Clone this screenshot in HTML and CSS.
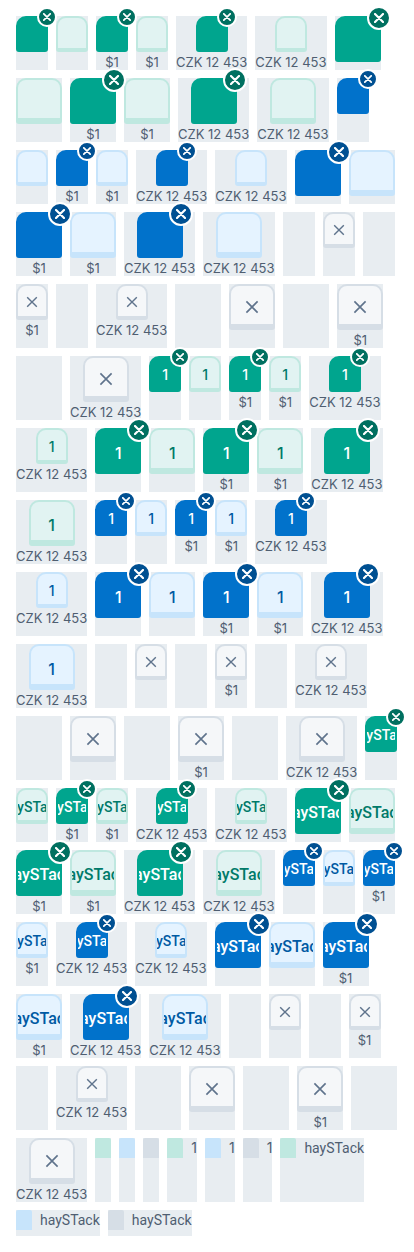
FILE: index.html
```html
<!DOCTYPE html>
<html lang="en">
<head>
<meta charset="utf-8">
<meta name="viewport" content="width=device-width, initial-scale=1">
<title>Seats</title>
<link rel="stylesheet" href="styles.css">
</head>
<body>
<svg class="sprite" aria-hidden="true">
  <symbol id="cross" viewBox="0 0 12 12"><path d="M1.2 1.2 10.8 10.8M10.8 1.2 1.2 10.8"/></symbol>
</svg>
<main class="board" id="board"></main>
<script src="seats.js"></script>
</body>
</html>
```

FILE: styles.css
```css
* {
  box-sizing: border-box;
}

body {
  margin: 0;
  background: #fff;
  color: #4f5e71;
  font-family: Inter, "Liberation Sans", sans-serif;
}

.sprite {
  position: absolute;
  width: 0;
  height: 0;
}

.board {
  display: flex;
  flex-wrap: wrap;
  gap: 8px;
  padding: 16px;
}

.cell {
  display: flex;
  flex-direction: column;
  align-items: center;
  background: #e8edf1;
}

.cell-small {
  min-width: 32px;
}

.cell-large {
  min-width: 46px;
}

.price {
  padding-top: 3px;
  font-size: 13px;
  line-height: 15px;
  white-space: nowrap;
}

.seat {
  position: relative;
  display: block;
  width: 32px;
  height: 36px;
  padding: 0;
  border: 2px solid;
  border-bottom-width: 4px;
  border-radius: 10px 10px 3px 3px;
  font: 500 14px/20px Inter, "Liberation Sans", sans-serif;
  cursor: pointer;
}

.seat-large {
  width: 46px;
  height: 46px;
  border-bottom-width: 6px;
  font-size: 16px;
}

.seat-label {
  display: flex;
  align-items: center;
  justify-content: center;
  height: 100%;
  padding-top: 4px;
  overflow: hidden;
  white-space: nowrap;
}

.seat-large .seat-label {
  padding-top: 7px;
}

.word {
  font-family: Roboto, "Liberation Sans", sans-serif;
}

.green {
  border-color: #bfe8e0;
  background: #e1f3f2;
  color: #007a69;
}

.blue {
  border-color: #c7e4fb;
  background: #e5f3ff;
  color: #005aa3;
}

.grey {
  padding-top: 2px;
  border-color: #d6dee6;
  background: #f5f7f9;
  color: #5f738c;
  cursor: default;
}

.grey.seat-large {
  padding-top: 4px;
}

.selected {
  color: #fff;
}

.selected.green {
  border-color: #00a58e;
  background: #00a58e;
}

.selected.blue {
  border-color: #0172cb;
  background: #0172cb;
}

.cross {
  display: block;
  width: 12px;
  height: 12px;
  margin: 0 auto;
  fill: none;
  stroke: currentColor;
  stroke-width: 1.4;
}

.seat-large .cross {
  width: 14px;
  height: 14px;
}

.badge {
  position: absolute;
  top: -11px;
  right: -11px;
  z-index: 1;
  display: flex;
  align-items: center;
  justify-content: center;
  width: 20px;
  height: 20px;
  border: 2px solid #fff;
  border-radius: 50%;
}

.seat-large .badge {
  top: -12px;
  right: -12px;
  width: 24px;
  height: 24px;
}

.green .badge {
  background: #007060;
}

.blue .badge {
  background: #005092;
}

.badge .cross {
  width: 8px;
  height: 8px;
  margin: 0;
  stroke-width: 2.6;
  stroke-linecap: round;
}

.seat-large .badge .cross {
  width: 10px;
  height: 10px;
}

.legend {
  display: flex;
  align-items: flex-start;
  gap: 8px;
  padding-bottom: 6px;
  background: #e8edf1;
  font-size: 14px;
  line-height: 20px;
}

.swatch {
  width: 16px;
  height: 20px;
  border-radius: 2px 2px 0 0;
}

.swatch-green {
  background: #bfe8e0;
}

.swatch-blue {
  background: #c7e4fb;
}

.swatch-grey {
  background: #d6dee6;
}
```

FILE: seats.js
```js
const board = document.getElementById("board");
const labels = ["", "1", "haySTack"];
const colours = ["green", "blue", "grey"];
const sizes = ["small", "large"];
const prices = ["", "$1", "CZK 12 453"];
const cross = '<svg class="cross" aria-hidden="true"><use href="#cross"/></svg>';
const kind = label => (label.length > 1 ? "word" : "number");

function seat(label, colour, size, price, selected) {
  const open = `<div class="cell cell-${size}">`;
  const taken = colour === "grey";
  // A taken seat cannot be selected, so its cell stays empty.
  if (taken && selected) return `${open}</div>`;

  const name = `${label || "Seat"}${price ? ", " + price : ""}`;
  const badge = selected ? `<span class="badge">${cross}</span>` : "";
  const content = taken ? cross : `<span class="seat-label ${kind(label)}">${label}</span>`;
  const priceTag = price ? `<div class="price">${price}</div>` : "";
  return `${open}<button type="button" class="seat seat-${size} ${colour}${selected ? " selected" : ""}"
    aria-label="${name}"${taken ? " disabled" : ` aria-pressed="${selected}"`}>${content}${badge}</button>${priceTag}</div>`;
}

function legend(label, colour) {
  return `<div class="legend"><span class="swatch swatch-${colour}"></span>${label ? `<span class="${kind(label)}">${label}</span>` : ""}</div>`;
}

let html = "";
for (const label of labels)
  for (const colour of colours)
    for (const size of sizes)
      for (const price of prices)
        for (const selected of [true, false])
          html += seat(label, colour, size, price, selected);

for (const label of labels)
  for (const colour of colours)
    html += legend(label, colour);

board.innerHTML = html;
```
